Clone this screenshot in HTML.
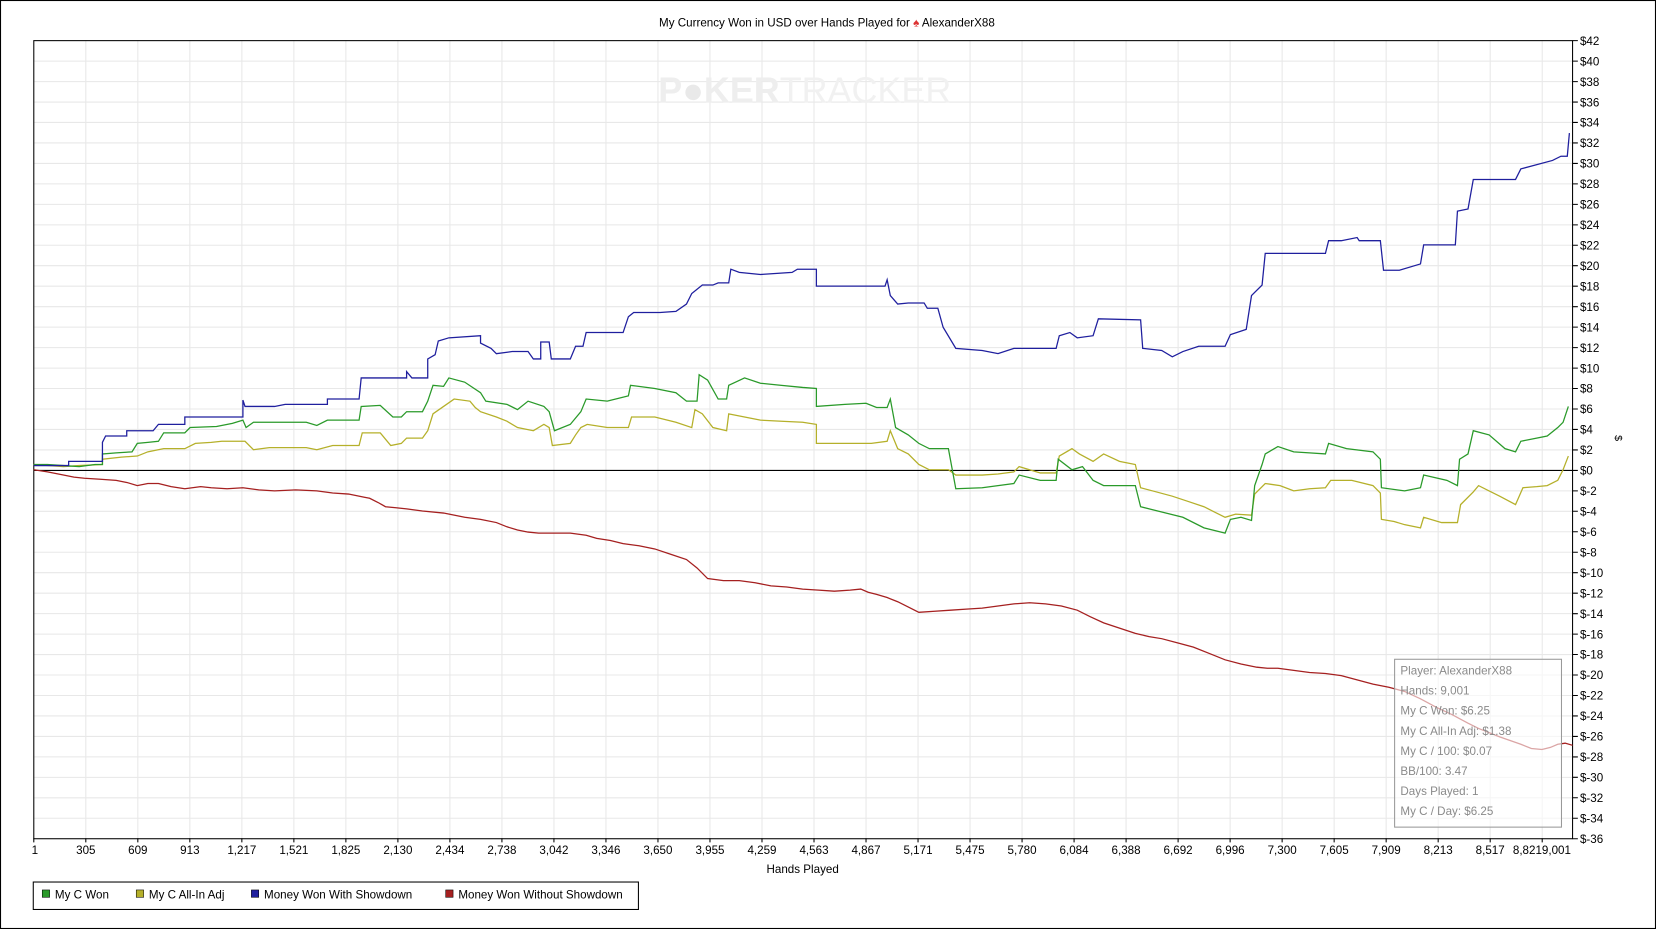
<!DOCTYPE html>
<html><head><meta charset="utf-8"><style>
html,body{margin:0;padding:0;background:#fff;}
svg{display:block;}
text{font-family:"Liberation Sans",sans-serif;}
</style></head><body>
<svg width="1656" height="929" viewBox="0 0 1568 880" preserveAspectRatio="none" xmlns="http://www.w3.org/2000/svg">
<rect x="0.5" y="0.5" width="1567" height="879" fill="#fff" stroke="#000"/>
<text x="783" y="25" font-size="11" text-anchor="middle" fill="#000">My Currency Won in USD over Hands Played for <tspan fill="#d33">♠</tspan> AlexanderX88</text>
<path stroke="#e8e8e8" stroke-width="1" fill="none" d="M32 57.9H1489M32 77.3H1489M32 96.7H1489M32 116H1489M32 135.4H1489M32 154.8H1489M32 174.2H1489M32 193.6H1489M32 213H1489M32 232.3H1489M32 251.7H1489M32 271.1H1489M32 290.5H1489M32 309.9H1489M32 329.3H1489M32 348.7H1489M32 368H1489M32 387.4H1489M32 406.8H1489M32 426.2H1489M32 464.96H1489M32 484.35H1489M32 503.73H1489M32 523.12H1489M32 542.5H1489M32 561.88H1489M32 581.27H1489M32 600.65H1489M32 620.04H1489M32 639.42H1489M32 658.81H1489M32 678.19H1489M32 697.58H1489M32 716.96H1489M32 736.35H1489M32 755.73H1489M32 775.12H1489
M81.25 38V794M130.5 38V794M179.75 38V794M229 38V794M278.25 38V794M327.5 38V794M376.75 38V794M426 38V794M475.25 38V794M524.5 38V794M573.75 38V794M623 38V794M672.25 38V794M721.5 38V794M770.75 38V794M820 38V794M869.25 38V794M918.5 38V794M967.75 38V794M1017 38V794M1066.25 38V794M1115.5 38V794M1164.75 38V794M1214 38V794M1263.25 38V794M1312.5 38V794M1361.75 38V794M1411 38V794M1460.25 38V794"/>
<text x="762" y="97" font-size="34" font-weight="bold" text-anchor="middle" fill="#eeeeee">P<tspan fill="#e9e9e9">●</tspan>KER<tspan font-weight="normal" fill="#f1f1f1">TRACKER</tspan></text>
<rect x="32" y="38.5" width="1457" height="756" fill="none" stroke="#000"/>
<line x1="32" y1="445.6" x2="1489" y2="445.6" stroke="#000"/>
<path stroke="#000" fill="none" d="M1489 38.5h5M1489 57.9h5M1489 77.3h5M1489 96.7h5M1489 116h5M1489 135.4h5M1489 154.8h5M1489 174.2h5M1489 193.6h5M1489 213h5M1489 232.3h5M1489 251.7h5M1489 271.1h5M1489 290.5h5M1489 309.9h5M1489 329.3h5M1489 348.7h5M1489 368h5M1489 387.4h5M1489 406.8h5M1489 426.2h5M1489 445.6h5M1489 465h5M1489 484.3h5M1489 503.7h5M1489 523.1h5M1489 542.5h5M1489 561.9h5M1489 581.3h5M1489 600.7h5M1489 620h5M1489 639.4h5M1489 658.8h5M1489 678.2h5M1489 697.6h5M1489 717h5M1489 736.3h5M1489 755.7h5M1489 775.1h5M1489 794.5h5
M32 794v4M81.25 794v4M130.5 794v4M179.75 794v4M229 794v4M278.25 794v4M327.5 794v4M376.75 794v4M426 794v4M475.25 794v4M524.5 794v4M573.75 794v4M623 794v4M672.25 794v4M721.5 794v4M770.75 794v4M820 794v4M869.25 794v4M918.5 794v4M967.75 794v4M1017 794v4M1066.25 794v4M1115.5 794v4M1164.75 794v4M1214 794v4M1263.25 794v4M1312.5 794v4M1361.75 794v4M1411 794v4M1460.25 794v4"/>
<g font-size="11" fill="#000">
<text x="1496" y="42.5">$42</text><text x="1496" y="61.9">$40</text><text x="1496" y="81.3">$38</text><text x="1496" y="100.7">$36</text><text x="1496" y="120">$34</text><text x="1496" y="139.4">$32</text><text x="1496" y="158.8">$30</text><text x="1496" y="178.2">$28</text><text x="1496" y="197.6">$26</text><text x="1496" y="217">$24</text><text x="1496" y="236.3">$22</text><text x="1496" y="255.7">$20</text><text x="1496" y="275.1">$18</text><text x="1496" y="294.5">$16</text><text x="1496" y="313.9">$14</text><text x="1496" y="333.3">$12</text><text x="1496" y="352.7">$10</text><text x="1496" y="372">$8</text><text x="1496" y="391.4">$6</text><text x="1496" y="410.8">$4</text><text x="1496" y="430.2">$2</text><text x="1496" y="449.6">$0</text><text x="1496" y="469">$-2</text><text x="1496" y="488.3">$-4</text><text x="1496" y="507.7">$-6</text><text x="1496" y="527.1">$-8</text><text x="1496" y="546.5">$-10</text><text x="1496" y="565.9">$-12</text><text x="1496" y="585.3">$-14</text><text x="1496" y="604.7">$-16</text><text x="1496" y="624">$-18</text><text x="1496" y="643.4">$-20</text><text x="1496" y="662.8">$-22</text><text x="1496" y="682.2">$-24</text><text x="1496" y="701.6">$-26</text><text x="1496" y="721">$-28</text><text x="1496" y="740.3">$-30</text><text x="1496" y="759.7">$-32</text><text x="1496" y="779.1">$-34</text><text x="1496" y="798.5">$-36</text>
</g>
<g font-size="11" fill="#000" text-anchor="middle">
<text x="33" y="809">1</text><text x="81.25" y="809">305</text><text x="130.5" y="809">609</text><text x="179.75" y="809">913</text><text x="229" y="809">1,217</text><text x="278.25" y="809">1,521</text><text x="327.5" y="809">1,825</text><text x="376.75" y="809">2,130</text><text x="426" y="809">2,434</text><text x="475.25" y="809">2,738</text><text x="524.5" y="809">3,042</text><text x="573.75" y="809">3,346</text><text x="623" y="809">3,650</text><text x="672.25" y="809">3,955</text><text x="721.5" y="809">4,259</text><text x="770.75" y="809">4,563</text><text x="820" y="809">4,867</text><text x="869.25" y="809">5,171</text><text x="918.5" y="809">5,475</text><text x="967.75" y="809">5,780</text><text x="1017" y="809">6,084</text><text x="1066.25" y="809">6,388</text><text x="1115.5" y="809">6,692</text><text x="1164.75" y="809">6,996</text><text x="1214" y="809">7,300</text><text x="1263.25" y="809">7,605</text><text x="1312.5" y="809">7,909</text><text x="1361.75" y="809">8,213</text><text x="1411" y="809">8,517</text><text x="1460" y="809">8,8219,001</text>
</g>
<g fill="none" stroke-width="1.2" stroke-linejoin="miter">
<polyline stroke="#a52020" points="32,445 45,447 60,450 70,452 80,453 95,454 110,455 120,457 130,460 140,458 150,458 162,461 175,463 190,461 200,462 215,463 230,462 245,464 260,465 280,464 300,465 315,467 330,468 345,471 350,472 358,476 365,480 375,481 385,482 400,484 420,486 430,488 440,490 455,492 470,495 480,499 490,502 500,504 510,505 525,505 540,505 555,507 565,510 578,512 590,515 605,517 620,520 635,525 650,530 660,538 670,548 685,550 700,550 715,552 730,555 745,556 760,558 775,559 790,560 805,559 815,558 822,561 830,563 840,566 850,570 858,574 870,580 885,579 900,578 915,577 930,576 945,574 960,572 975,571 990,572 1005,574 1020,578 1032,584 1045,590 1060,595 1075,600 1088,603 1100,605 1115,609 1130,613 1145,619 1160,625 1175,629 1190,632 1200,633 1210,633 1225,635 1240,637 1255,638 1270,640 1285,644 1300,648 1315,651 1330,655 1345,662 1360,670 1375,677 1390,685 1400,690 1420,698 1440,705 1450,709 1460,710 1468,708 1475,705 1482,704 1489,706"/>
<polyline stroke="#b5b02a" points="32,440 45,441 60,442 75,441 97,440 97,435 115,433 130,432 140,428 155,425 175,425 185,420 200,419 210,418 232,418 240,426 255,424 270,424 290,424 300,426 315,422 330,422 340,422 343,410 360,410 365,416 370,422 380,420 385,415 400,415 405,408 410,392 420,385 430,378 445,380 450,386 455,390 470,395 480,399 490,405 505,408 515,402 520,405 523,422 540,420 545,412 550,405 556,402 575,405 595,405 598,395 620,395 640,400 655,405 658,388 665,392 675,405 688,408 690,392 705,395 720,398 740,399 760,400 773,402 773,420 800,420 825,420 840,418 843,408 850,425 860,430 870,440 880,445 898,445 905,450 930,450 945,449 960,447 965,442 985,448 1000,448 1003,432 1015,425 1022,430 1035,437 1045,430 1060,437 1075,440 1080,462 1095,466 1110,470 1125,475 1140,480 1150,485 1160,490 1170,487 1185,488 1188,468 1198,458 1212,460 1225,465 1240,463 1255,462 1260,455 1280,455 1300,460 1307,467 1308,492 1320,494 1330,497 1345,500 1348,490 1365,495 1380,495 1383,478 1395,466 1400,460 1410,465 1420,470 1435,478 1442,462 1455,461 1465,460 1475,455 1480,445 1485,432"/>
<polyline stroke="#2a9a2a" points="32,440 45,440 60,441 75,442 90,440 97,440 97,430 110,429 125,428 130,420 140,419 150,418 155,410 175,410 180,405 205,404 220,401 230,398 233,405 240,400 270,400 290,400 300,403 310,398 340,398 342,385 360,384 372,395 380,395 385,390 400,390 405,380 410,365 420,366 425,358 440,362 455,372 460,380 480,383 490,388 500,380 515,385 520,390 525,408 540,402 550,390 555,378 575,380 595,375 597,365 620,368 640,372 650,380 660,380 662,355 670,360 680,378 688,378 690,365 705,358 720,363 740,365 760,367 773,368 773,385 800,383 820,382 830,386 840,386 843,378 848,405 860,412 870,420 880,425 890,425 898,425 905,463 930,462 945,460 960,458 965,450 985,455 1000,455 1002,435 1015,445 1025,442 1035,455 1045,460 1060,460 1075,460 1080,480 1100,485 1120,490 1140,500 1160,505 1165,492 1175,490 1185,493 1188,460 1195,440 1198,430 1210,423 1225,428 1240,429 1255,430 1258,420 1275,425 1300,428 1307,435 1308,462 1330,465 1345,462 1348,450 1370,455 1380,460 1382,435 1390,430 1395,408 1410,412 1425,425 1435,428 1440,418 1455,415 1465,413 1475,405 1480,400 1485,385"/>
<polyline stroke="#1f1f9e" points="32,441 65,441 65,437 97,437 97,419 100,413 120,413 120,408 145,408 150,402 175,402 175,395 230,395 230,379 232,385 260,385 270,383 310,383 310,378 340,378 342,358 385,358 385,352 390,358 405,358 405,340 412,336 415,323 425,320 455,318 455,325 465,330 470,335 485,333 500,333 505,340 512,340 512,324 520,324 522,340 540,340 545,328 552,328 555,315 575,315 590,315 595,300 600,296 625,296 640,295 650,288 655,278 665,270 675,270 680,268 690,268 692,255 700,258 720,260 750,258 755,255 773,255 773,271 810,271 838,271 840,265 843,280 850,288 860,287 875,287 878,292 888,292 893,310 905,330 930,332 945,335 960,330 1000,330 1003,318 1013,315 1020,320 1035,318 1040,302 1080,303 1082,330 1100,332 1110,338 1120,333 1135,328 1160,328 1165,317 1180,312 1185,280 1195,270 1198,240 1255,240 1258,228 1270,228 1285,225 1287,228 1307,228 1310,256 1325,256 1345,250 1348,232 1378,232 1380,200 1390,198 1395,170 1435,170 1440,160 1470,152 1478,148 1484,148 1486,126"/>
</g>
<rect x="1320.5" y="624.5" width="158" height="159" fill="rgba(255,255,255,0.6)" stroke="#999"/>
<g font-size="11" fill="#8a8a8a">
<text x="1326" y="639">Player: AlexanderX88</text>
<text x="1326" y="658">Hands: 9,001</text>
<text x="1326" y="677">My C Won: $6.25</text>
<text x="1326" y="696">My C All-In Adj: $1.38</text>
<text x="1326" y="715">My C / 100: $0.07</text>
<text x="1326" y="734">BB/100: 3.47</text>
<text x="1326" y="753">Days Played: 1</text>
<text x="1326" y="772">My C / Day: $6.25</text>
</g>
<text x="760" y="827" font-size="11" text-anchor="middle">Hands Played</text>
<text x="0" y="0" font-size="10" transform="translate(1529,415) rotate(90)" text-anchor="middle">$</text>
<rect x="31.5" y="835.5" width="573" height="26" fill="#fff" stroke="#000"/>
<g font-size="11">
<rect x="40" y="843" width="7" height="7" fill="#2a9a2a" stroke="#000" stroke-width=".5"/><text x="52" y="851">My C Won</text>
<rect x="129" y="843" width="7" height="7" fill="#b5b02a" stroke="#000" stroke-width=".5"/><text x="141" y="851">My C All-In Adj</text>
<rect x="238" y="843" width="7" height="7" fill="#1f1f9e" stroke="#000" stroke-width=".5"/><text x="250" y="851">Money Won With Showdown</text>
<rect x="422" y="843" width="7" height="7" fill="#a52020" stroke="#000" stroke-width=".5"/><text x="434" y="851">Money Won Without Showdown</text>
</g>
</svg>
</body></html>
